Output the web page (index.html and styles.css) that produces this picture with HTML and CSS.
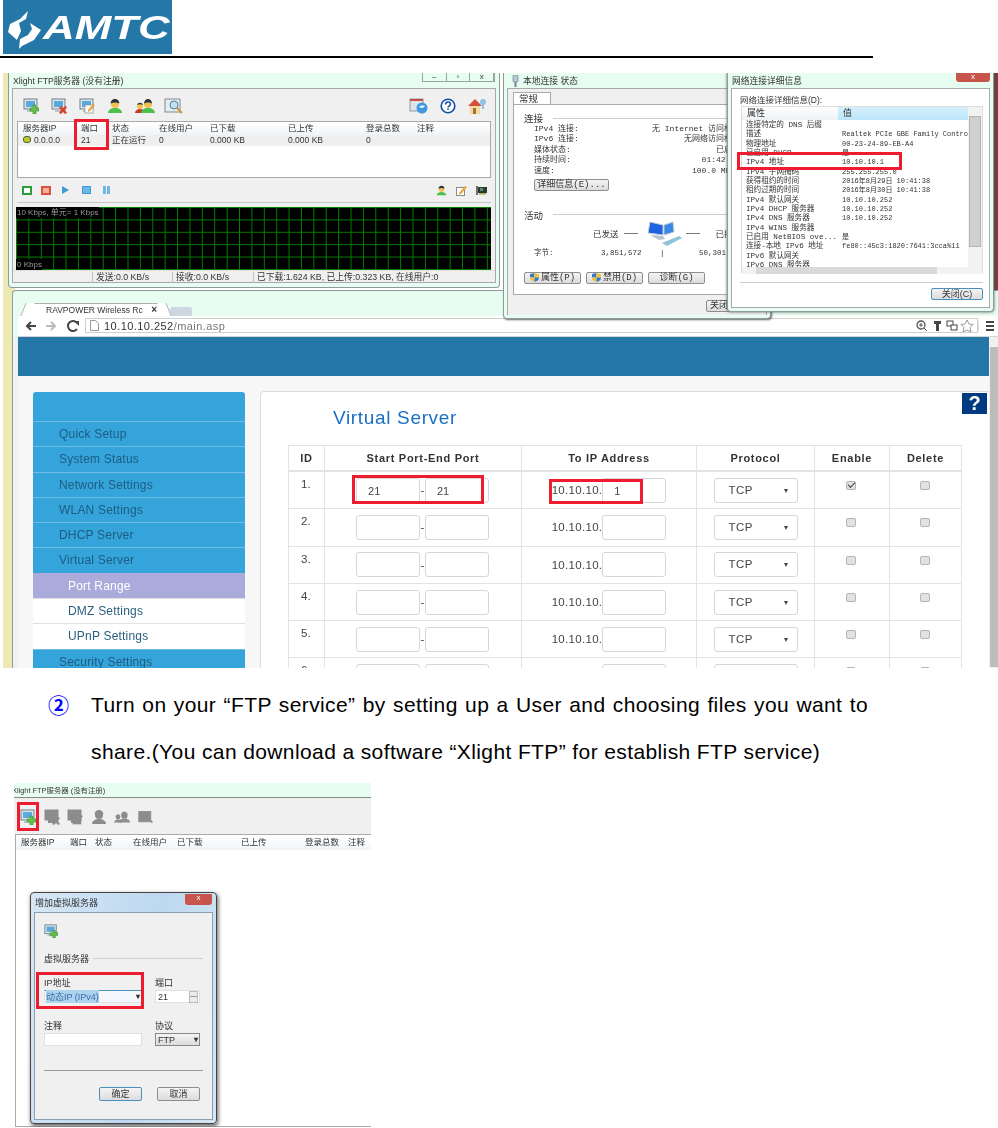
FILE: index.html
```html
<!DOCTYPE html>
<html lang="en">
<head>
  <meta charset="UTF-8">
  <title>FTP service</title>
  <link rel="stylesheet" href="styles.css">
</head>
<body>
  <svg class="defs" width="0" height="0">
    <symbol id="i-srv" viewBox="0 0 16 16">
      <rect x="1" y="1" width="13" height="10" fill="#dfe6ea" stroke="#6d7f8a"/>
      <rect x="3" y="3" width="9" height="6" fill="#5aa9dd"/>
      <rect x="4" y="11" width="7" height="3" fill="#b9c4ca"/>
    </symbol>
    <symbol id="i-add" viewBox="0 0 16 16">
      <use href="#i-srv"/>
      <path d="M10 7h3v3h3v3h-3v3h-3v-3H7v-3h3z" fill="#63c24a" stroke="#3c8c2e" stroke-width=".6"/>
    </symbol>
    <symbol id="i-del" viewBox="0 0 16 16">
      <use href="#i-srv"/>
      <path d="M8 9l2-1 2 2 2-2 2 1-2 3 2 3-2 1-2-2-2 2-2-1 2-3z" fill="#d8412f"/>
    </symbol>
    <symbol id="i-edit" viewBox="0 0 16 16">
      <use href="#i-srv"/>
      <rect x="6" y="7" width="8" height="8" fill="#fff" stroke="#8a8a8a" stroke-width=".7"/>
      <path d="M9 12l5-6 2 1-5 6-2 1z" fill="#e8a63a"/>
    </symbol>
    <symbol id="i-user" viewBox="0 0 16 16">
      <path d="M1 15c0-3 3-5 7-5s7 2 7 5z" fill="#4dbf4a"/>
      <circle cx="8" cy="6" r="4" fill="#f2c04e"/>
      <path d="M3.600 5.500C4 2 6 1 8 1s4 1 4.400 4.500C10 4 6 4 3.600 5.500z" fill="#23323a"/>
    </symbol>
    <symbol id="i-users" viewBox="0 0 20 16">
      <path d="M0 15c0-2 2-4 5-4s5 2 5 4z" fill="#c9362c"/>
      <circle cx="5" cy="8" r="3" fill="#f2c04e"/>
      <path d="M2 7c1-3 5-3 6 0-2-1-4-1-6 0z" fill="#23323a"/>
      <path d="M6 15c0-3 3-5 7-5s7 2 7 5z" fill="#4dbf4a"/>
      <circle cx="13" cy="6" r="4" fill="#f2c04e"/>
      <path d="M9 5.500C9.500 2 11 1 13 1s3.500 1 4 4.500c-2-1.500-6-1.500-8 0z" fill="#23323a"/>
    </symbol>
    <symbol id="i-log" viewBox="0 0 20 16">
      <rect x="1" y="1" width="15" height="13" fill="#e6ebee" stroke="#7c8b94"/>
      <circle cx="10" cy="7" r="4" fill="#bfe0f4" stroke="#5b7f96"/>
      <path d="M13 10l5 5" stroke="#d6952f" stroke-width="2"/>
    </symbol>
    <symbol id="i-globe" viewBox="0 0 20 16">
      <rect x="1" y="1" width="13" height="12" fill="#dbe4ea" stroke="#8b97a0"/>
      <rect x="1" y="1" width="13" height="2" fill="#c2503f"/>
      <circle cx="13" cy="10" r="5.500" fill="#3f97dd"/>
      <path d="M10 9c2-2 4-2 6-1-1 2-4 3-6 1z" fill="#dff0fb"/>
    </symbol>
    <symbol id="i-help" viewBox="0 0 20 20">
      <circle cx="10" cy="10" r="8.500" fill="#fff" stroke="#1150a8" stroke-width="2"/>
      <path d="M7 8c0-4 6-4 6-.5 0 2.500-3 2.500-3 4.500" fill="none" stroke="#1150a8" stroke-width="2"/>
      <rect x="9" y="13" width="2" height="2" fill="#1150a8"/>
    </symbol>
    <symbol id="i-home" viewBox="0 0 20 16">
      <path d="M1 8l7-7 7 7z" fill="#d3513a"/>
      <rect x="3" y="8" width="10" height="8" fill="#f1d9a8"/>
      <rect x="6" y="10" width="3" height="6" fill="#a5702e"/>
      <circle cx="16" cy="4" r="3" fill="#8dc3e6"/>
      <rect x="15" y="6" width="2" height="5" fill="#8dc3e6"/>
    </symbol>
    <symbol id="i-note" viewBox="0 0 11 11">
      <rect x=".5" y="2.500" width="8" height="8" fill="#fff" stroke="#8a8a8a"/>
      <path d="M3 8l6-7 2 1-6 7-2 .5z" fill="#e8a63a"/>
    </symbol>
    <symbol id="i-card" viewBox="0 0 11 11">
      <rect x="2" y="2" width="9" height="6" fill="#2c3a32"/>
      <rect x="0" y="1" width="2" height="9" fill="#6d6d6d"/>
      <rect x="3" y="8" width="7" height="1.500" fill="#b2a24a"/>
      <rect x="4" y="3" width="3" height="3" fill="#5c8f6a"/>
    </symbol>
    <symbol id="i-shield" viewBox="0 0 10 10">
      <path d="M0 1l5-1v5H0z" fill="#3b78c9"/>
      <path d="M5 0l5 1v4H5z" fill="#f0c534"/>
      <path d="M0 5h5v5C2 9 0 8 0 5z" fill="#f0c534"/>
      <path d="M5 5h5c0 3-2 4-5 5z" fill="#3b78c9"/>
    </symbol>
    <symbol id="i-net" viewBox="0 0 36 26">
      <path d="M3 1l13 3v10L1 12z" fill="#1f62e0" stroke="#c3ccd6"/>
      <path d="M17 4l9-3 1 10-10 3z" fill="#3a87ea" stroke="#c3ccd6"/>
      <path d="M3 14l13 1 2 3-6 1z" fill="#b9c3ce"/>
      <path d="M15 22l17-7 3 2-15 8z" fill="#8fc4dc"/>
    </symbol>
    <symbol id="i-plug" viewBox="0 0 7 12">
      <rect x="1" y="0" width="5" height="7" rx="1" fill="#b9c9d6" stroke="#71828f" stroke-width=".7"/>
      <rect x="2.500" y="7" width="2" height="5" fill="#71828f"/>
    </symbol>
  </svg>

  <header class="doc-head">
    <div class="logo">
      <svg class="logo-mark" viewBox="0 0 34 46" width="34" height="46">
        <path d="M20 7l-2 8-7 4 2 8-4 9-9-8 2-8 10-5z" fill="#fff"/>
        <path d="M22 19l11 7-7 10-12 6-3 3 1-10 8-4 4-6z" fill="#fff"/>
      </svg>
      <span class="logo-text">AMTC</span>
    </div>
  </header>

  <section class="shot shot-top">
    <div class="win xlight">
      <div class="win-title">Xlight FTP服务器 (没有注册)</div>
      <div class="win-ctl"><span>–</span><span>▫</span><span>x</span></div>
      <div class="xl-body">
        <div class="xl-tools">
          <svg class="ic"><use href="#i-add"/></svg>
          <svg class="ic"><use href="#i-del"/></svg>
          <svg class="ic"><use href="#i-edit"/></svg>
          <svg class="ic"><use href="#i-user"/></svg>
          <svg class="ic ic-w"><use href="#i-users"/></svg>
          <svg class="ic ic-w ic-log"><use href="#i-log"/></svg>
          <span class="spring"></span>
          <svg class="ic ic-w ic-r"><use href="#i-globe"/></svg>
          <svg class="ic ic-w ic-r"><use href="#i-help"/></svg>
          <svg class="ic ic-w ic-r"><use href="#i-home"/></svg>
        </div>
        <div class="xl-list">
          <div class="xl-row xl-head">
            <span>服务器IP</span><span>端口</span><span>状态</span><span>在线用户</span><span>已下载</span><span>已上传</span><span>登录总数</span><span>注释</span>
          </div>
          <div class="xl-row xl-item">
            <span><i class="bulb"></i>0.0.0.0</span><span>21</span><span>正在运行</span><span>0</span><span>0.000 KB</span><span>0.000 KB</span><span>0</span><span></span>
          </div>
        </div>
        <div class="xl-ctrl">
          <i class="c-btn c-play"></i>
          <i class="c-btn c-stop"></i>
          <i class="c-tri"></i>
          <i class="c-sq"></i>
          <i class="c-pause"></i>
          <span class="spring"></span>
          <svg class="ic-s"><use href="#i-user"/></svg>
          <svg class="ic-s"><use href="#i-note"/></svg>
          <svg class="ic-s"><use href="#i-card"/></svg>
        </div>
        <div class="xl-graph">
          <span>10 Kbps, 单元= 1 Kbps</span>
          <span>0 Kbps</span>
        </div>
        <div class="xl-status">
          <span></span><span>发送:0.0 KB/s</span><span>接收:0.0 KB/s</span><span>已下载:1.624 KB, 已上传:0.323 KB, 在线用户:0</span>
        </div>
      </div>
      <i class="red-box rb-port"></i>
    </div>

    <div class="win status">
      <svg class="st-plug"><use href="#i-plug"/></svg>
      <div class="win-title">本地连接 状态</div>
      <div class="st-body">
        <div class="st-tab">常规</div>
        <div class="st-sheet">
          <div class="st-legend"><span>连接</span><i></i></div>
          <div class="st-row"><span>IPv4 连接:</span><span>无 Internet 访问权限</span></div>
          <div class="st-row"><span>IPv6 连接:</span><span>无网络访问权限</span></div>
          <div class="st-row"><span>媒体状态:</span><span>已启用</span></div>
          <div class="st-row"><span>持续时间:</span><span>01:42:08</span></div>
          <div class="st-row"><span>速度:</span><span>100.0 Mbps</span></div>
          <div class="btn st-detail">详细信息(E)...</div>
          <div class="st-legend st-act"><span>活动</span><i></i></div>
          <div class="st-traffic">
            <span>已发送</span><i class="st-dash"></i>
            <svg class="st-net"><use href="#i-net"/></svg>
            <i class="st-dash"></i><span class="st-recv">已接收</span>
          </div>
          <div class="st-bytes"><span>字节:</span><span>3,851,572</span><span class="st-bar">|</span><span>50,301,486</span></div>
          <div class="st-btns">
            <div class="btn"><svg class="ic-shield"><use href="#i-shield"/></svg>属性(P)</div>
            <div class="btn"><svg class="ic-shield"><use href="#i-shield"/></svg>禁用(D)</div>
            <div class="btn">诊断(G)</div>
          </div>
        </div>
        <div class="st-foot"><div class="btn">关闭(C)</div></div>
      </div>
    </div>

    <div class="win detail">
      <div class="win-title">网络连接详细信息</div>
      <div class="win-close">x</div>
      <div class="dt-body">
        <div class="dt-label">网络连接详细信息(D):</div>
        <div class="dt-list">
          <div class="dt-main">
            <div class="dt-head"><span>属性</span><span>值</span></div>
            <div class="dt-rows">
              <span>连接特定的 DNS 后缀</span><span></span>
              <span>描述</span><span>Realtek PCIe GBE Family Contro</span>
              <span>物理地址</span><span>00-23-24-89-EB-A4</span>
              <span>已启用 DHCP</span><span>是</span>
              <span>IPv4 地址</span><span>10.10.10.1</span>
              <span>IPv4 子网掩码</span><span>255.255.255.0</span>
              <span>获得租约的时间</span><span>2016年8月29日 10:41:38</span>
              <span>租约过期的时间</span><span>2016年8月30日 10:41:38</span>
              <span>IPv4 默认网关</span><span>10.10.10.252</span>
              <span>IPv4 DHCP 服务器</span><span>10.10.10.252</span>
              <span>IPv4 DNS 服务器</span><span>10.10.10.252</span>
              <span>IPv4 WINS 服务器</span><span></span>
              <span>已启用 NetBIOS ove...</span><span>是</span>
              <span>连接-本地 IPv6 地址</span><span>fe80::45c3:1820:7641:3cca%11</span>
              <span>IPv6 默认网关</span><span></span>
              <span>IPv6 DNS 服务器</span><span></span>
            </div>
          </div>
          <div class="dt-vbar"><i></i></div>
          <div class="dt-hbar"><i></i></div>
        </div>
        <div class="dt-foot"><div class="btn btn-def">关闭(C)</div></div>
      </div>
      <i class="red-box rb-addr"></i>
    </div>

    <div class="win browser">
      <div class="br-tabs">
        <div class="br-tab">RAVPOWER Wireless Rc<b>×</b></div>
        <div class="br-newtab"></div>
      </div>
      <div class="br-bar">
        <svg class="br-nav" viewBox="0 0 54 12" width="54" height="12">
          <path d="M11 6H3m3-4L2 6l4 4" fill="none" stroke="#444" stroke-width="2"/>
          <path d="M21 6h8m-3-4l4 4-4 4" fill="none" stroke="#bbb" stroke-width="2"/>
          <path d="M52 3a5 5 0 1 0 0 6" fill="none" stroke="#444" stroke-width="2"/>
          <path d="M49 1h5v5z" fill="#444"/>
        </svg>
        <div class="br-url">
          <svg width="9" height="11" viewBox="0 0 9 11"><path d="M.5.500h5l3 3v7h-8z" fill="#fff" stroke="#999"/></svg>
          <span>10.10.10.252<em>/main.asp</em></span>
          <span class="spring"></span>
          <svg class="br-ext" viewBox="0 0 58 12" width="58" height="12">
            <circle cx="5" cy="5" r="4" fill="none" stroke="#555" stroke-width="1.300"/>
            <path d="M8 8l3 3M3 5h4M5 3v4" stroke="#555"/>
            <path d="M18 1h7v3h-2v7h-3V4h-2z" fill="#444"/>
            <rect x="31" y="1" width="6" height="5" fill="#fff" stroke="#444"/>
            <rect x="35" y="5" width="6" height="5" fill="#fff" stroke="#444"/>
            <path d="M51 0l2 4 4 .5-3 3 1 4.500-4-2-4 2 1-4.500-3-3 4-.5z" fill="#fff" stroke="#999"/>
          </svg>
        </div>
        <div class="br-menu"><i></i><i></i><i></i></div>
      </div>
      <div class="br-view">
        <div class="br-page">
          <div class="rt-banner"></div>
          <div class="rt-main">
            <nav class="rt-side">
              <div class="rt-side-top"></div>
              <a>Quick Setup</a>
              <a>System Status</a>
              <a>Network Settings</a>
              <a>WLAN Settings</a>
              <a>DHCP Server</a>
              <a>Virtual Server</a>
              <a class="sub on">Port Range</a>
              <a class="sub">DMZ Settings</a>
              <a class="sub">UPnP Settings</a>
              <a>Security Settings</a>
            </nav>
            <div class="rt-panel">
              <div class="rt-help">?</div>
              <h2>Virtual Server</h2>
              <div class="rt-table">
                <div class="th">ID</div><div class="th">Start Port-End Port</div><div class="th">To IP Address</div><div class="th">Protocol</div><div class="th">Enable</div><div class="th">Delete</div>

                <div class="td id">1.</div>
                <div class="td ports"><span class="inp">21</span>-<span class="inp">21</span></div>
                <div class="td ip">10.10.10.<span class="inp">1</span></div>
                <div class="td"><span class="sel">TCP</span></div>
                <div class="td chk"><i class="cb cb-on"></i></div>
                <div class="td chk"><i class="cb"></i></div>

                <div class="td id">2.</div>
                <div class="td ports"><span class="inp"></span>-<span class="inp"></span></div>
                <div class="td ip">10.10.10.<span class="inp"></span></div>
                <div class="td"><span class="sel">TCP</span></div>
                <div class="td chk"><i class="cb"></i></div>
                <div class="td chk"><i class="cb"></i></div>

                <div class="td id">3.</div>
                <div class="td ports"><span class="inp"></span>-<span class="inp"></span></div>
                <div class="td ip">10.10.10.<span class="inp"></span></div>
                <div class="td"><span class="sel">TCP</span></div>
                <div class="td chk"><i class="cb"></i></div>
                <div class="td chk"><i class="cb"></i></div>

                <div class="td id">4.</div>
                <div class="td ports"><span class="inp"></span>-<span class="inp"></span></div>
                <div class="td ip">10.10.10.<span class="inp"></span></div>
                <div class="td"><span class="sel">TCP</span></div>
                <div class="td chk"><i class="cb"></i></div>
                <div class="td chk"><i class="cb"></i></div>

                <div class="td id">5.</div>
                <div class="td ports"><span class="inp"></span>-<span class="inp"></span></div>
                <div class="td ip">10.10.10.<span class="inp"></span></div>
                <div class="td"><span class="sel">TCP</span></div>
                <div class="td chk"><i class="cb"></i></div>
                <div class="td chk"><i class="cb"></i></div>

                <div class="td id">6.</div>
                <div class="td ports"><span class="inp"></span>-<span class="inp"></span></div>
                <div class="td ip">10.10.10.<span class="inp"></span></div>
                <div class="td"><span class="sel">TCP</span></div>
                <div class="td chk"><i class="cb"></i></div>
                <div class="td chk"><i class="cb"></i></div>
              </div>
              <i class="red-box rb-range"></i>
              <i class="red-box rb-ip"></i>
            </div>
          </div>
        </div>
        <div class="br-scroll"><i></i></div>
      </div>
    </div>
  </section>

  <section class="step">
    <span class="step-no">②</span>
    <p>Turn on your “FTP service” by setting up a User and choosing files you want to share.(You can download a software “Xlight FTP” for establish FTP service)</p>
  </section>

  <section class="shot shot-add">
    <div class="add-title">Xlight FTP服务器 (没有注册)</div>
    <div class="add-tools">
      <svg class="ic"><use href="#i-add"/></svg>
      <svg class="ic dim"><use href="#i-del"/></svg>
      <svg class="ic dim"><use href="#i-edit"/></svg>
      <svg class="ic dim"><use href="#i-user"/></svg>
      <svg class="ic dim"><use href="#i-users"/></svg>
      <svg class="ic dim"><use href="#i-log"/></svg>
    </div>
    <div class="add-list">
      <div class="add-head">
        <span>服务器IP</span><span>端口</span><span>状态</span><span>在线用户</span><span>已下载</span><span>已上传</span><span>登录总数</span><span>注释</span>
      </div>
    </div>
    <i class="red-box rb-tool"></i>

    <div class="dlg">
      <div class="dlg-title">增加虚拟服务器</div>
      <div class="win-close dlg-close">x</div>
      <div class="dlg-body">
        <svg class="dlg-icon"><use href="#i-add"/></svg>
        <div class="st-legend dlg-legend"><span>虚拟服务器</span><i></i></div>
        <div class="dlg-grid">
          <div class="dlg-f">
            <label>IP地址</label>
            <div class="dlg-ctl dlg-sel"><span class="picked">动态IP (IPv4)</span><b>▾</b></div>
          </div>
          <div class="dlg-f">
            <label>端口</label>
            <div class="dlg-ctl dlg-num"><span>21</span><i class="spin"></i></div>
          </div>
          <div class="dlg-f">
            <label>注释</label>
            <div class="dlg-ctl"></div>
          </div>
          <div class="dlg-f">
            <label>协议</label>
            <div class="dlg-ctl dlg-drop"><span>FTP</span><b>▾</b></div>
          </div>
        </div>
        <div class="dlg-line"></div>
        <div class="dlg-btns">
          <div class="btn btn-def">确定</div>
          <div class="btn">取消</div>
        </div>
      </div>
      <i class="red-box rb-type"></i>
    </div>
  </section>
</body>
</html>
```

FILE: styles.css
```css
* {
  margin: 0;
  padding: 0;
  box-sizing: border-box;
}
html, body {
  height: 1128px;
  overflow: hidden;
}
body {
  background: #ffffff;
  font-family: "Liberation Sans", "Noto Sans CJK SC", sans-serif;
  color: #000000;
}
i, em {
  font-style: normal;
}
.defs {
  position: absolute;
}
.spring {
  flex: 1;
}

/* page header */
.doc-head {
  height: 58px;
  width: 873px;
  border-bottom: 2px solid #000000;
  padding-left: 3px;
}
.logo {
  display: flex;
  align-items: center;
  width: 169px;
  height: 54px;
  padding-left: 5px;
  background: #2577a7;
  overflow: hidden;
}
.logo-mark {
  flex: none;
}
.logo-text {
  margin-left: 1px;
  color: #ffffff;
  font-size: 33px;
  font-weight: bold;
  font-style: italic;
  line-height: 1;
  transform: scaleX(1.33);
  transform-origin: left center;
}

/* screenshot pieces */
.shot {
  position: relative;
  overflow: hidden;
  filter: blur(.35px);
}
.shot-top {
  width: 995px;
  height: 595px;
  margin: 15px 0 0 3px;
  background: linear-gradient(90deg, #ece9b4 0, #ece9b4 12px, #ffffff 12px, #ffffff 990px, #7a3a3a 990px);
}
.win {
  position: absolute;
  background: #e8fdf2;
  border: 1px solid #8f9a9a;
  border-top: 0;
  border-radius: 0 0 4px 4px;
  font-size: 9px;
  color: #333333;
}
.win-title {
  height: 15px;
  padding: 3px 0 0 1px;
  font-size: 8.750px;
  line-height: 11px;
  white-space: nowrap;
}
.red-box {
  position: absolute;
  display: block;
  border: 3px solid #ed1c2e;
  pointer-events: none;
}
.btn {
  display: flex;
  align-items: center;
  justify-content: center;
  height: 12px;
  border: 1px solid #8e8e8e;
  border-radius: 2px;
  background: linear-gradient(#f4f4f4, #dcdcdc);
  font-size: 9px;
  line-height: 10px;
  white-space: nowrap;
}
.btn-def {
  border-color: #4a8fbd;
}
.win-close {
  position: absolute;
  top: 0;
  right: 3px;
  width: 34px;
  height: 9px;
  border-radius: 0 0 3px 3px;
  background: #c8554c;
  color: #ffffff;
  font-size: 8px;
  line-height: 8px;
  text-align: center;
}

/* xlight main window */
.xlight {
  left: 5px;
  top: 0;
  width: 492px;
  height: 215px;
  padding: 0 3px;
}
.win-ctl {
  position: absolute;
  top: 0;
  right: 4px;
  display: flex;
  width: 73px;
  height: 9px;
  border: 1px solid #9aa4a4;
  border-top: 0;
}
.win-ctl span {
  flex: 1;
  border-right: 1px solid #9aa4a4;
  font-size: 8px;
  line-height: 7px;
  text-align: center;
}
.xl-body {
  height: 195px;
  border: 1px solid #a9a9a9;
  background: #f0f0f0;
}
.xl-tools {
  display: flex;
  align-items: center;
  gap: 12px;
  height: 32px;
  padding: 2px 8px 0 10px;
}
.ic {
  width: 16px;
  height: 16px;
}
.ic-w {
  width: 20px;
}
.ic-log {
  margin-left: -3px;
}
.ic-r {
  margin-left: -3px;
}
.ic-s {
  width: 11px;
  height: 11px;
}
.xl-list {
  height: 57px;
  margin: 0 4px;
  border: 1px solid #a9a9a9;
  background: #ffffff;
}
.xl-row {
  display: grid;
  grid-template-columns: 58px 31px 47px 51px 78px 78px 51px 1fr;
  padding-left: 5px;
  font-size: 8.500px;
  white-space: nowrap;
}
.xl-head {
  height: 13px;
  line-height: 13px;
  background: linear-gradient(#ffffff, #f1f4f7);
}
.xl-item {
  height: 11px;
  line-height: 11px;
  background: #efefef;
}
.bulb {
  display: inline-block;
  width: 8px;
  height: 7px;
  margin-right: 3px;
  border-radius: 3px;
  background: #c9c033;
  border: 1px solid #3d6b2d;
}
.xl-ctrl {
  display: flex;
  align-items: center;
  gap: 9px;
  height: 25px;
  margin: 0 4px;
  padding: 0 4px 0 5px;
  border-bottom: 1px solid #c8c8c8;
}
.c-btn {
  width: 10px;
  height: 9px;
  border: 2px solid #2e9c3b;
  background: #ffffff;
}
.c-stop {
  border-color: #d9543a;
  background: #f2b09a;
}
.c-tri {
  width: 0;
  height: 0;
  margin: 0 2px;
  border-left: 7px solid #3f9ad6;
  border-top: 4px solid transparent;
  border-bottom: 4px solid transparent;
}
.c-sq {
  width: 9px;
  height: 8px;
  margin-left: 2px;
  background: #6db6e6;
  border: 1px solid #3f9ad6;
}
.c-pause {
  width: 7px;
  height: 8px;
  margin-left: 3px;
  border-left: 3px solid #6db6e6;
  border-right: 3px solid #6db6e6;
}
.xl-graph {
  display: flex;
  flex-direction: column;
  justify-content: space-between;
  height: 63px;
  margin: 4px 4px 0 3px;
  background-color: #000000;
  background-image:
    linear-gradient(90deg, #008000 1px, transparent 1px),
    linear-gradient(#008000 1px, transparent 1px);
  background-size: 12.400px 12.400px;
  color: #9a9a9a;
  font-size: 8px;
  line-height: 11px;
}
.xl-graph span {
  align-self: flex-start;
  background: #000000;
  padding-left: 1px;
}
.xl-status {
  display: grid;
  grid-template-columns: 80px 80px 81px 1fr;
  height: 13px;
  padding-top: 1px;
  font-size: 8.750px;
  line-height: 11px;
  white-space: nowrap;
  border-top: 1px solid #dddddd;
}
.xl-status span {
  padding-left: 3px;
  border-right: 1px solid #c0c0c0;
}
.xl-status span:last-child {
  border-right: 0;
}
.rb-port {
  left: 65px;
  top: 46px;
  width: 35px;
  height: 31px;
}

/* local connection status */
.status {
  left: 500px;
  top: 0;
  width: 268px;
  height: 246px;
  padding: 0 3px;
  box-shadow: 1px 1px 2px #666666;
  font-family: "Liberation Mono", "Noto Sans CJK SC", monospace;
  z-index: 2;
}
.status .win-title {
  padding-left: 16px;
  font-family: "Liberation Sans", "Noto Sans CJK SC", sans-serif;
}
.st-plug {
  position: absolute;
  left: 8px;
  top: 2px;
  width: 7px;
  height: 12px;
}
.st-body {
  height: 227px;
  padding: 3px 8px 0 5px;
  border: 1px solid #a9a9a9;
  border-bottom: 0;
  background: #f0f0f0;
}
.st-tab {
  width: 38px;
  height: 13px;
  padding-left: 5px;
  border: 1px solid #a9a9a9;
  border-bottom: 0;
  background: #ffffff;
  line-height: 13px;
  font-size: 9.500px;
}
.st-sheet {
  height: 191px;
  margin-top: -1px;
  padding: 7px 17px 0 10px;
  border: 1px solid #a9a9a9;
  background: #ffffff;
}
.st-legend {
  display: flex;
  align-items: center;
  gap: 10px;
  height: 12px;
  font-family: "Liberation Sans", "Noto Sans CJK SC", sans-serif;
  font-size: 9.500px;
}
.st-legend i {
  flex: 1;
  height: 1px;
  background: #cfcfcf;
}
.st-row {
  display: flex;
  justify-content: space-between;
  height: 10.400px;
  padding-left: 10px;
  font-size: 8px;
  line-height: 10.400px;
  white-space: nowrap;
}
.st-detail {
  width: 75px;
  margin: 3px 0 0 10px;
}
.st-act {
  margin-top: 18px;
}
.st-traffic {
  display: flex;
  align-items: center;
  gap: 5px;
  height: 26px;
  margin: 0 0 0 69px;
  white-space: nowrap;
  font-size: 8.500px;
}
.st-dash {
  flex: none;
  width: 14px;
  height: 1px;
  background: #777777;
}
.st-net {
  flex: none;
  width: 36px;
  height: 26px;
  margin: 0 -2px 0 4px;
}
.st-recv {
  margin-left: 11px;
}
.st-bytes {
  display: grid;
  grid-template-columns: 67px 59px 39px 1fr;
  height: 12px;
  margin-left: 10px;
  font-size: 7.500px;
  line-height: 12px;
  white-space: nowrap;
}
.st-btns {
  display: flex;
  gap: 5px;
  margin-top: 13px;
}
.st-btns .btn {
  flex: none;
  width: 57px;
  gap: 2px;
}
.ic-shield {
  width: 9px;
  height: 9px;
}
.st-foot {
  display: flex;
  justify-content: flex-end;
  padding: 5px 0 0;
}
.st-foot .btn {
  width: 52px;
  justify-content: flex-start;
  padding-left: 3px;
}

/* connection details */
.detail {
  left: 724px;
  top: 0;
  width: 267px;
  height: 239px;
  padding: 0 3px;
  box-shadow: 0 0 3px #555555;
  z-index: 3;
}
.dt-body {
  height: 220px;
  padding: 6px 6px 0 8px;
  border: 1px solid #a9a9a9;
  background: #ffffff;
}
.dt-label {
  height: 11px;
  font-size: 8.500px;
  line-height: 10px;
}
.dt-list {
  display: grid;
  grid-template-columns: 1fr 14px;
  grid-template-rows: 160px 7px;
  height: 167px;
  margin-left: 1px;
  border: 1px solid #dddddd;
}
.dt-head {
  display: grid;
  grid-template-columns: 96px 1fr;
  height: 13px;
  background: linear-gradient(#ffffff, #eef1f3);
  line-height: 13px;
  font-size: 9px;
}
.dt-head span {
  padding-left: 5px;
}
.dt-head span:last-child {
  background: linear-gradient(#d6f0fd, #bde5fa);
}
.dt-rows {
  display: grid;
  grid-template-columns: 96px 1fr;
  grid-auto-rows: 9.340px;
  padding: 1px 0 0 4px;
  font-family: "Liberation Mono", "Noto Sans CJK SC", monospace;
  font-size: 7px;
  line-height: 9.340px;
  white-space: nowrap;
  overflow: hidden;
}
.dt-rows span:nth-child(odd) {
  font-size: 7.600px;
}
.dt-main {
  overflow: hidden;
  min-width: 0;
}
.dt-vbar {
  padding: 9px 1px;
  background: #f2f2f2;
}
.dt-vbar i {
  display: block;
  height: 131px;
  background: #d0d0d0;
  border: 1px solid #b5b5b5;
}
.dt-hbar {
  grid-column: 1 / 3;
  padding: 0 45px 0 14px;
  background: #f2f2f2;
}
.dt-hbar i {
  display: block;
  height: 7px;
  background: #d9d9d9;
}
.dt-foot {
  display: flex;
  justify-content: flex-end;
  margin-top: 9px;
  border-top: 1px solid #cccccc;
}
.dt-foot .btn {
  width: 52px;
  margin-top: 5px;
}
.rb-addr {
  left: 9px;
  top: 79px;
  width: 165px;
  height: 18px;
}

/* browser window */
.browser {
  left: 9px;
  top: 217px;
  width: 986px;
  height: 378px;
  border-top: 1px solid #8f9a9a;
  border-right: 0;
  border-radius: 4px 0 0 0;
  z-index: 1;
}
.br-tabs {
  display: flex;
  align-items: flex-end;
  height: 25px;
  padding-left: 11px;
}
.br-tab {
  position: relative;
  display: flex;
  align-items: center;
  justify-content: space-between;
  width: 140px;
  height: 13px;
  margin-left: 2px;
  padding: 0 9px 0 20px;
  border-top: 1px solid #b0b0b0;
  background: #ffffff;
  font-size: 8.500px;
  white-space: nowrap;
}
.br-tab::before, .br-tab::after {
  content: "";
  position: absolute;
  top: -1px;
  width: 8px;
  height: 13px;
  background: #ffffff;
  border-left: 1px solid #b0b0b0;
  transform: skewX(-22deg);
}
.br-tab::before {
  left: -3px;
}
.br-tab::after {
  right: -3px;
  border-left: 0;
  border-right: 1px solid #b0b0b0;
  transform: skewX(22deg);
}
.br-tab b {
  position: relative;
  z-index: 1;
  font-size: 10px;
  line-height: 10px;
}
.br-newtab {
  width: 22px;
  height: 9px;
  margin-left: 4px;
  border-radius: 2px 2px 0 0;
  background: #ccd7e0;
}
.br-bar {
  display: flex;
  align-items: center;
  height: 21px;
  margin-left: 5px;
  padding: 0 0 1px 7px;
  background: #ffffff;
  border-bottom: 1px solid #d5d5d5;
}
.br-nav {
  flex: none;
}
.br-url {
  display: flex;
  align-items: center;
  gap: 5px;
  flex: 1;
  height: 15px;
  margin-left: 6px;
  padding: 0 3px 0 4px;
  border: 1px solid #cfcfcf;
  background: #ffffff;
  font-size: 11px;
  letter-spacing: .45px;
}
.br-url em {
  color: #777777;
}
.br-menu {
  display: flex;
  flex-direction: column;
  gap: 2px;
  width: 20px;
  padding: 0 4px 0 7px;
  border-left: 1px solid #dddddd;
}
.br-menu i {
  height: 2px;
  background: #444444;
}
.br-view {
  display: flex;
  height: 331px;
  padding-left: 5px;
  background: #eef3f1;
  overflow: hidden;
}
.br-page {
  flex: 1;
  background: #f7f7f7;
}
.br-scroll {
  width: 11px;
  padding-top: 10px;
  background: #f1f1f1;
}
.br-scroll i {
  display: block;
  height: 320px;
  background: #bdbdbd;
  margin-left: 1px;
}
.rt-banner {
  height: 39px;
  background: #2577a7;
}
.rt-main {
  display: flex;
  gap: 15px;
  padding: 15px 0 0 15px;
}
.rt-side {
  width: 212px;
  margin-top: 1px;
  flex: none;
  border-radius: 3px 3px 0 0;
  overflow: hidden;
  background: #35a4db;
}
.rt-side-top {
  height: 29px;
}
.rt-side a {
  display: block;
  height: 25.300px;
  padding-left: 26px;
  border-top: 1px solid #6fbde4;
  color: #1c5d80;
  font-size: 12px;
  letter-spacing: .2px;
  line-height: 24px;
}
.rt-side .sub {
  padding-left: 35px;
  background: #ffffff;
  border-top-color: #e0e0e0;
  color: #2a5f80;
}
.rt-side .on {
  background: #aaaadb;
  color: #ffffff;
  border-top-color: #aaaadb;
}
.rt-panel {
  position: relative;
  flex: 1;
  height: 300px;
  padding: 0 27px;
  border: 1px solid #dddddd;
  border-right: 0;
  border-radius: 4px 0 0 0;
  background: #ffffff;
}
.rt-help {
  position: absolute;
  top: 1px;
  right: 2px;
  width: 25px;
  height: 21px;
  background: #003a80;
  color: #ffffff;
  font-size: 20px;
  font-weight: bold;
  line-height: 21px;
  text-align: center;
}
.rt-panel h2 {
  height: 53px;
  padding: 16px 0 0 45px;
  color: #1a6fc4;
  font-size: 19px;
  font-weight: normal;
  line-height: 20px;
  letter-spacing: .66px;
}
.rt-table {
  display: grid;
  grid-template-columns: 36px 197px 175px 118px 75px 72px;
  grid-template-rows: 27px repeat(6, 37.300px);
  width: 674px;
  border-left: 1px solid #e3e3e3;
  font-size: 11.500px;
  color: #444444;
}
.th, .td {
  border-right: 1px solid #e3e3e3;
  border-bottom: 1px solid #e3e3e3;
}
.th {
  border-top: 1px solid #e3e3e3;
  border-bottom-width: 2px;
  font-size: 11px;
  font-weight: bold;
  color: #333333;
  line-height: 24px;
  text-align: center;
  letter-spacing: .7px;
  white-space: nowrap;
}
.td {
  display: flex;
  align-items: center;
  justify-content: center;
}
.id {
  align-items: flex-start;
  justify-content: flex-start;
  padding: 6px 0 0 12px;
}
.inp {
  display: block;
  width: 64px;
  height: 25px;
  padding-left: 11px;
  border: 1px solid #d6d6d6;
  border-radius: 3px;
  background: #ffffff;
  font-size: 11px;
  line-height: 24px;
}
.ports {
  gap: .5px;
  padding-right: 1px;
}
.ip {
  letter-spacing: .3px;
}
.ip .inp {
  letter-spacing: 0;
}
.sel {
  position: relative;
  display: block;
  width: 84px;
  height: 25px;
  padding-left: 14px;
  border: 1px solid #d6d6d6;
  border-radius: 3px;
  line-height: 22px;
  letter-spacing: .5px;
}
.sel::after {
  content: "";
  position: absolute;
  right: 9px;
  top: 10px;
  border-left: 2.500px solid transparent;
  border-right: 2.500px solid transparent;
  border-top: 4px solid #444444;
}
.chk {
  align-items: flex-start;
  padding: 9px 2px 0 0;
}
.cb {
  display: block;
  width: 10px;
  height: 9px;
  border: 1px solid #b5b5b5;
  border-radius: 2px;
  background: #e2e2e2;
}
.cb-on {
  background: #e2e2e2;
  box-shadow: inset 0 0 0 1px #e2e2e2;
  position: relative;
}
.cb-on::after {
  content: "";
  position: absolute;
  left: 1px;
  top: 0;
  width: 6px;
  height: 3px;
  border-left: 1.500px solid #444444;
  border-bottom: 1.500px solid #444444;
  transform: rotate(-45deg);
}
.rb-range {
  left: 91px;
  top: 83px;
  width: 132px;
  height: 29px;
}
.rb-ip {
  left: 288px;
  top: 87px;
  width: 94px;
  height: 25px;
}

/* step text */
.step {
  display: grid;
  grid-template-columns: 43px 777px;
  margin-top: 13px;
  padding-left: 48px;
  font-size: 21px;
  line-height: 47px;
}
.step-no {
  color: #0000ff;
  font-family: "Noto Sans CJK SC", sans-serif;
  font-size: 21px;
  font-weight: bold;
}
.step p {
  letter-spacing: .39px;
  text-align: justify;
}

/* second screenshot */
.shot-add {
  width: 357px;
  height: 344px;
  margin: 8px 0 0 14px;
  font-size: 9px;
  color: #333333;
}
.add-title {
  height: 15px;
  padding: 2px 0 0 0;
  background: #e8fdf2;
  border-bottom: 1px solid #888888;
  font-size: 7.400px;
  line-height: 11px;
  text-indent: -2px;
  white-space: nowrap;
}
.add-tools {
  display: flex;
  align-items: center;
  gap: 7.500px;
  height: 36px;
  padding: 2px 0 0 6px;
  background: #f0f0f0;
}
.dim {
  filter: brightness(0) invert(.55);
}
.add-list {
  height: 293px;
  margin-left: 1px;
  border: 1px solid #aaaaaa;
  border-right: 0;
  background: #ffffff;
}
.add-head {
  display: grid;
  grid-template-columns: 49px 25px 38px 44px 64px 64px 43px 1fr;
  height: 15px;
  padding-left: 5px;
  background: linear-gradient(#ffffff, #f1f4f7);
  font-size: 8.500px;
  line-height: 15px;
  white-space: nowrap;
}
.rb-tool {
  left: 3px;
  top: 19px;
  width: 22px;
  height: 29px;
}
.dlg {
  position: absolute;
  left: 16px;
  top: 109px;
  width: 187px;
  height: 232px;
  padding: 0 3px 5px;
  border: 1px solid #444444;
  border-radius: 4px;
  background: linear-gradient(100deg, #d7e7f5, #bcd8f0 60%, #d6e6f4);
  box-shadow: 1px 2px 4px #555555;
}
.dlg-title {
  height: 19px;
  padding: 4px 0 0 1px;
  line-height: 12px;
  font-size: 9px;
}
.dlg-close {
  top: 1px;
  right: 4px;
  width: 27px;
  height: 11px;
}
.dlg-body {
  display: flex;
  flex-direction: column;
  height: 208px;
  padding: 11px 9px 0;
  border: 1px solid #8ba0b0;
  background: #f0f0f0;
}
.dlg-icon {
  width: 14px;
  height: 14px;
  flex: none;
}
.dlg-legend {
  flex: none;
  margin-top: 14px;
  gap: 4px;
  font-size: 9px;
}
.dlg-grid {
  display: grid;
  grid-template-columns: 98px 45px;
  column-gap: 13px;
  row-gap: 17px;
  margin-top: 13px;
}
.dlg-f label {
  display: block;
  height: 13px;
  line-height: 12px;
}
.dlg-ctl {
  display: flex;
  align-items: center;
  justify-content: space-between;
  height: 13px;
  padding: 0 1px;
  background: #ffffff;
  border: 1px solid #e0e0e0;
  white-space: nowrap;
}
.dlg-ctl b {
  font-size: 8px;
}
.dlg-sel {
  border-top-color: #4a8fbd;
  background: #f4f8fc;
}
.picked {
  background: #aed3ee;
  color: #3a6ea5;
}
.dlg-num {
  padding-left: 2px;
}
.spin {
  width: 9px;
  height: 12px;
  border: 1px solid #bbbbbb;
  background: linear-gradient(#ececec 45%, #999999 45%, #999999 55%, #ececec 55%);
}
.dlg-drop {
  padding-left: 2px;
  border: 1px solid #888888;
  background: linear-gradient(#f4f4f4, #dcdcdc);
}
.dlg-line {
  flex: none;
  height: 1px;
  margin-top: 24px;
  background: #9a9a9a;
}
.dlg-btns {
  display: flex;
  justify-content: flex-end;
  gap: 15px;
  margin: 16px 3px 0 0;
}
.dlg-btns .btn {
  width: 43px;
  height: 14px;
}
.rb-type {
  left: 5px;
  top: 79px;
  width: 108px;
  height: 37px;
}
```
